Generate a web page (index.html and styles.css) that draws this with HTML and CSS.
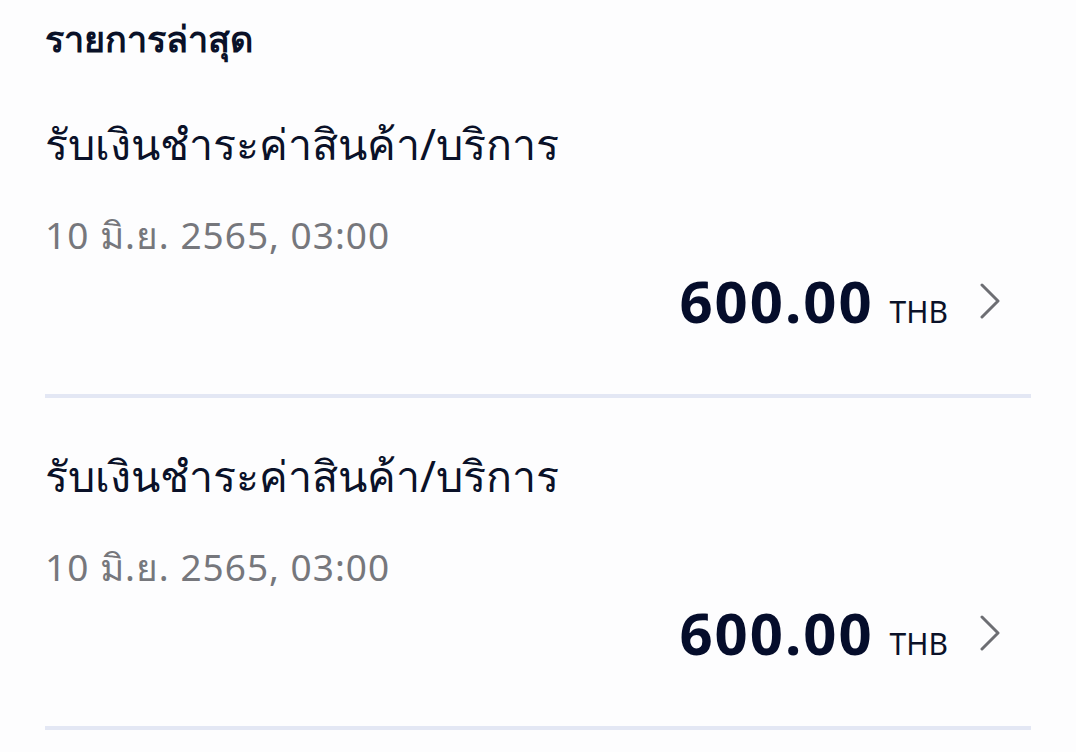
FILE: index.html
```html
<!DOCTYPE html>
<html lang="th">
<head>
    <meta charset="UTF-8">
    <meta name="viewport" content="width=device-width, initial-scale=1.0">
    <title>รายการล่าสุด</title>
    <link rel="stylesheet" href="styles.css">
</head>
<body>

    <h2 class="section-title">รายการล่าสุด</h2>

    <div class="tx-list">
        <div class="tx-item">
            <div class="tx-name">รับเงินชำระค่าสินค้า/บริการ</div>
            <div class="tx-date">10 มิ.ย. 2565, 03:00</div>
            <div class="tx-amount-row">
                <span class="tx-amount">600.00</span>
                <span class="tx-currency">THB</span>
                <svg class="chevron" width="24" height="36" viewBox="0 0 24 36">
                    <polyline points="4,2 20,18 4,34" fill="none" stroke="#6d6e73" stroke-width="3" stroke-linecap="round" stroke-linejoin="round"/>
                </svg>
            </div>
        </div>

        <div class="tx-item">
            <div class="tx-name">รับเงินชำระค่าสินค้า/บริการ</div>
            <div class="tx-date">10 มิ.ย. 2565, 03:00</div>
            <div class="tx-amount-row">
                <span class="tx-amount">600.00</span>
                <span class="tx-currency">THB</span>
                <svg class="chevron" width="24" height="36" viewBox="0 0 24 36">
                    <polyline points="4,2 20,18 4,34" fill="none" stroke="#6d6e73" stroke-width="3" stroke-linecap="round" stroke-linejoin="round"/>
                </svg>
            </div>
        </div>
    </div>

</body>
</html>
```

FILE: styles.css
```css
body {
    font-family: "Noto Sans", sans-serif;
    margin: 0;
    padding: 0 45px;
    background-color: #fdfdfe;
    color: #0a1128;
}

.section-title {
    font-size: 36px;
    font-weight: bold;
    margin: 0;
    padding-top: 13px;
    line-height: 52px;
}

.tx-item {
    border-bottom: 4px solid #e3e7f4;
    padding-top: 51px;
    padding-bottom: 57px;
}

.tx-item + .tx-item {
    padding-top: 50px;
}

.tx-name {
    font-size: 43px;
    line-height: 56px;
}

.tx-date {
    font-size: 37px;
    letter-spacing: 1px;
    line-height: 48px;
    color: #76777c;
    margin-top: 39px;
}

.tx-amount-row {
    display: flex;
    justify-content: flex-end;
    align-items: baseline;
    padding-right: 29px;
    margin-top: 6px;
}

.tx-amount {
    font-size: 58px;
    font-weight: bold;
    letter-spacing: 2px;
    color: #050d2b;
    line-height: 72px;
}

.tx-currency {
    font-size: 30px;
    margin-left: 16px;
    color: #0a1128;
}

.chevron {
    margin-left: 30px;
    align-self: center;
}
```
